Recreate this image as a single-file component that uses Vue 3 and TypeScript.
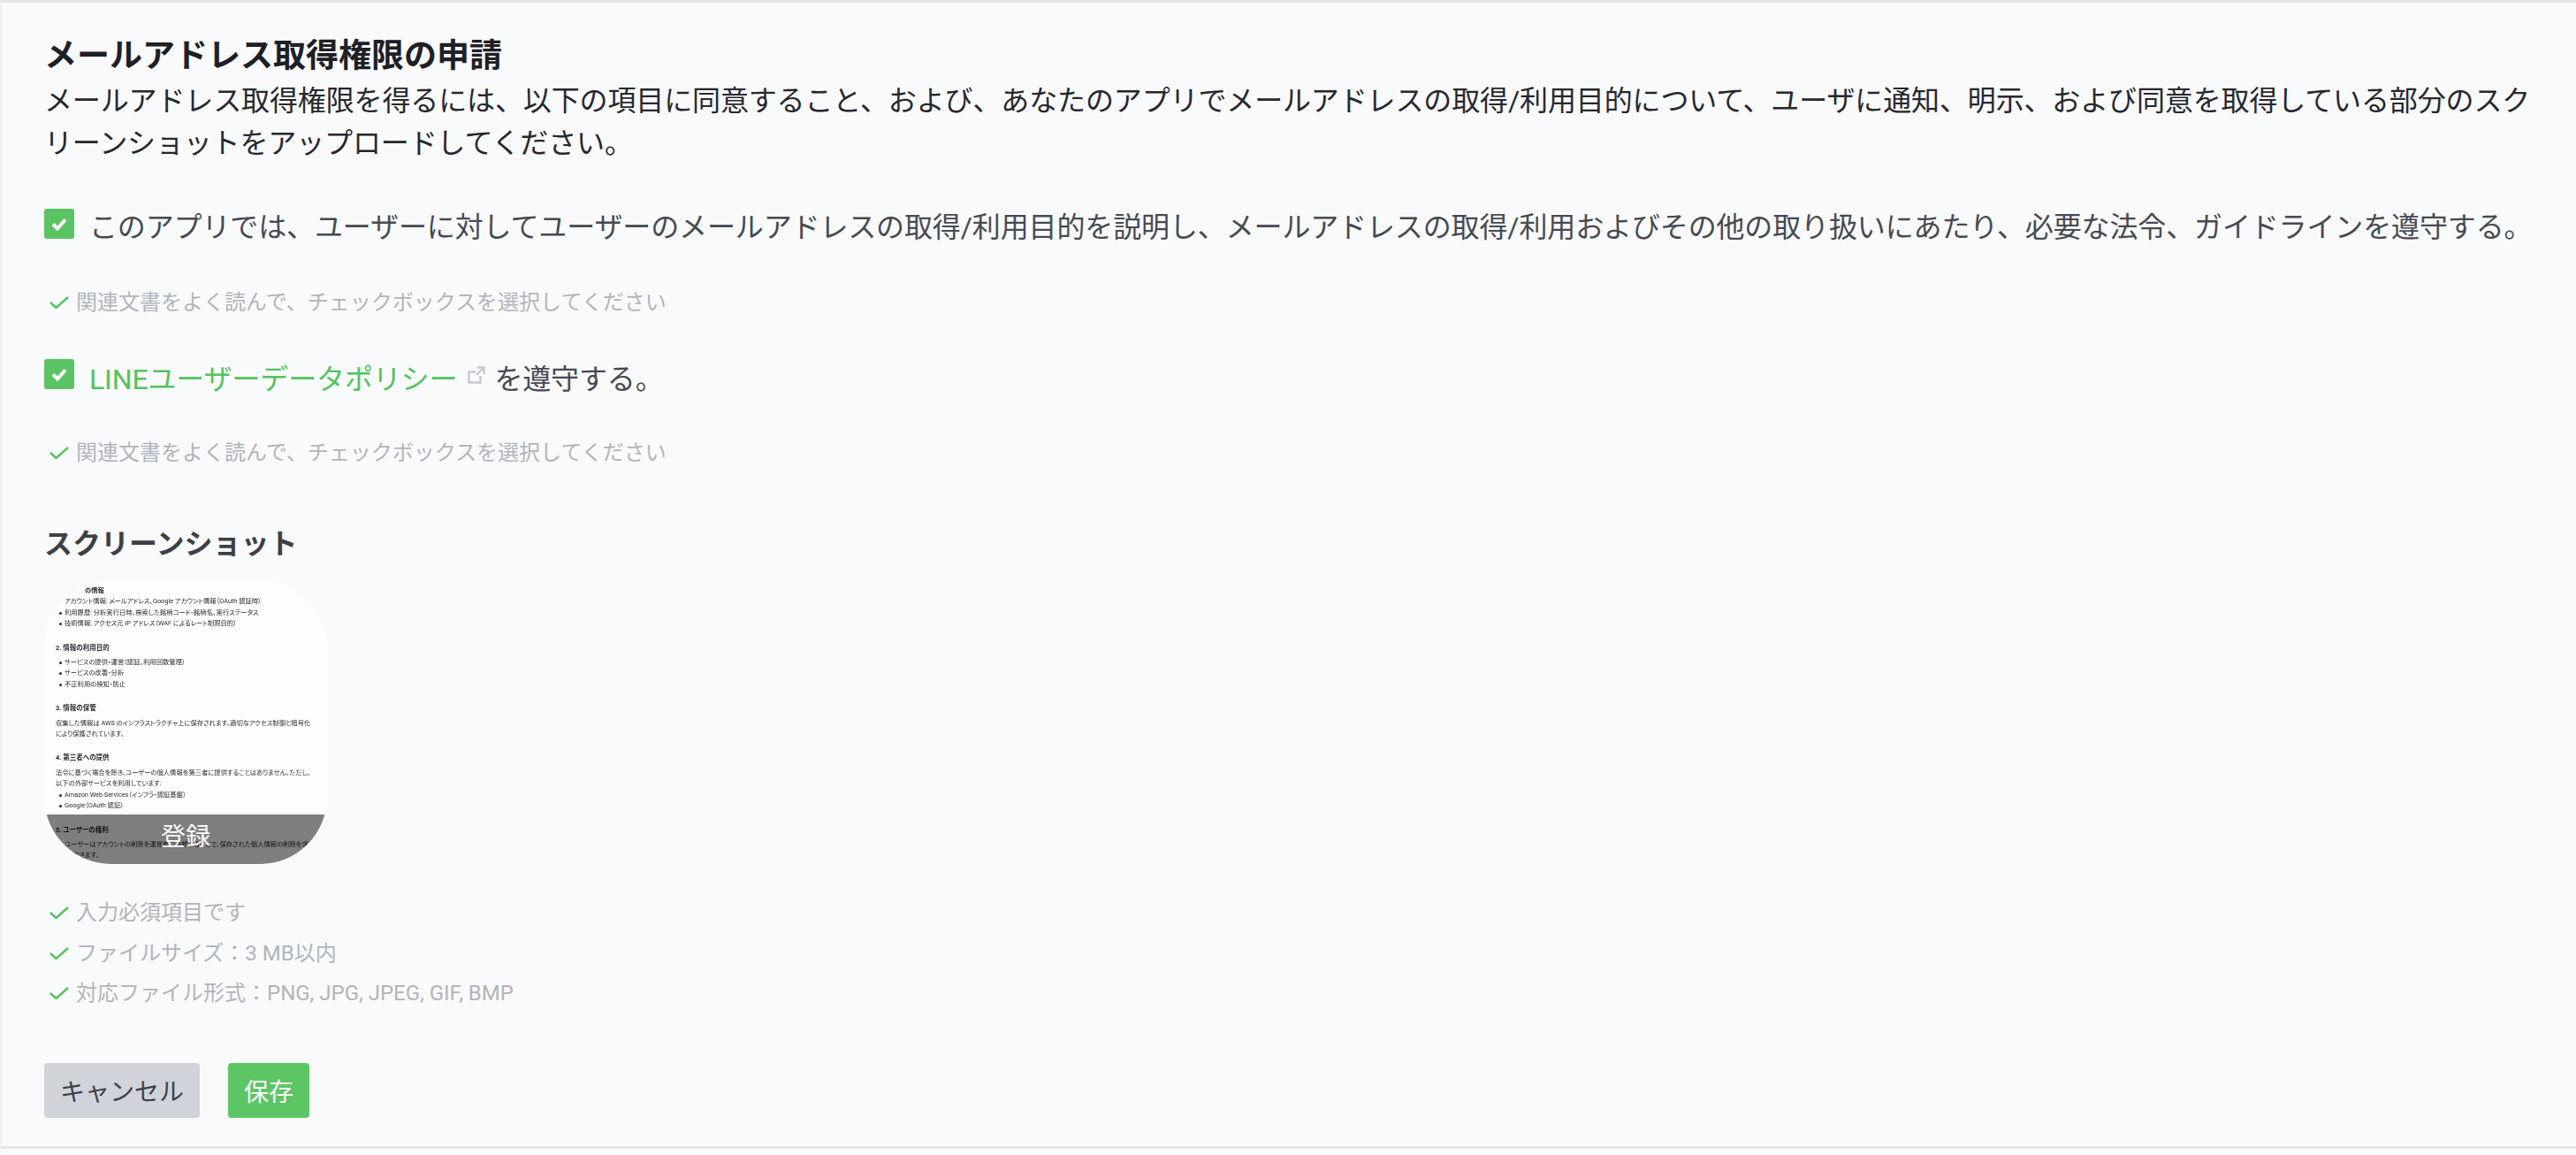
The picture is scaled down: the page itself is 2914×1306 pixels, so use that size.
<script setup lang="ts">
interface Hint { id: number; text: string }
const listHints: Hint[] = [
  { id: 1, text: '入力必須項目です' },
  { id: 2, text: 'ファイルサイズ：3 MB以内' },
  { id: 3, text: '対応ファイル形式：PNG, JPG, JPEG, GIF, BMP' },
]
const readHint = '関連文書をよく読んで、チェックボックスを選択してください'
</script>

<template>
  <main class="panel">
    <h1 class="title">メールアドレス取得権限の申請</h1>
    <p class="lead">メールアドレス取得権限を得るには、以下の項目に同意すること、および、あなたのアプリでメールアドレスの取得/利用目的について、ユーザに通知、明示、および同意を取得している部分のスクリーンショットをアップロードしてください。</p>

    <div class="agree first">
      <span class="box"><svg viewBox="0 0 34 34" class="box-check"><path d="M10 17.500l5 4.800 9-10" /></svg></span>
      <span class="agree-text">このアプリでは、ユーザーに対してユーザーのメールアドレスの取得/利用目的を説明し、メールアドレスの取得/利用およびその他の取り扱いにあたり、必要な法令、ガイドラインを遵守する。</span>
    </div>
    <div class="hint read-hint first-hint">
      <svg viewBox="0 0 22 14" class="tick"><path d="M1 7l6.500 6L21 1" /></svg>
      <span>{{ readHint }}</span>
    </div>

    <div class="agree second">
      <span class="box"><svg viewBox="0 0 34 34" class="box-check"><path d="M10 17.500l5 4.800 9-10" /></svg></span>
      <span class="agree-text">
        <span class="link">LINEユーザーデータポリシー</span>
        <svg viewBox="0 0 20 20" class="ext"><path d="M9 6.500H1.500V18.500H14.500V11M11 1.500h7.500V9M18 2l-8 8" /></svg>
        <span class="after">を遵守する。</span>
      </span>
    </div>
    <div class="hint read-hint">
      <svg viewBox="0 0 22 14" class="tick"><path d="M1 7l6.500 6L21 1" /></svg>
      <span>{{ readHint }}</span>
    </div>

    <h2 class="sub">スクリーンショット</h2>
    <div class="shot">
      <div class="doc">
        <div class="d-first"><b>の情報</b></div>
        <div class="li">アカウント情報: メールアドレス、Google アカウント情報（OAuth 認証時）</div>
        <div class="li">利用履歴: 分析実行日時、検索した銘柄コード・銘柄名、実行ステータス</div>
        <div class="li">技術情報: アクセス元 IP アドレス（WAF によるレート制限目的）</div>
        <h3>2. 情報の利用目的</h3>
        <div class="li">サービスの提供・運営（認証、利用回数管理）</div>
        <div class="li">サービスの改善・分析</div>
        <div class="li">不正利用の検知・防止</div>
        <h3>3. 情報の保管</h3>
        <div class="para">収集した情報は AWS のインフラストラクチャ上に保存されます。適切なアクセス制御と暗号化</div>
        <div class="para">により保護されています。</div>
        <h3>4. 第三者への提供</h3>
        <div class="para">法令に基づく場合を除き、ユーザーの個人情報を第三者に提供することはありません。ただし、</div>
        <div class="para">以下の外部サービスを利用しています:</div>
        <div class="li">Amazon Web Services（インフラ・認証基盤）</div>
        <div class="li">Google（OAuth 認証）</div>
        <h3>5. ユーザーの権利</h3>
        <div class="li">ユーザーはアカウントの削除を運営者に依頼することで、保存された個人情報の削除を求める</div>
        <div class="para">ことができます。</div>
      </div>
      <div class="shot-overlay">登録</div>
    </div>

    <div class="hints">
      <div v-for="h in listHints" :key="h.id" class="hint">
        <svg viewBox="0 0 22 14" class="tick"><path d="M1 7l6.500 6L21 1" /></svg>
        <span>{{ h.text }}</span>
      </div>
    </div>

    <div class="actions">
      <button class="btn cancel" type="button">キャンセル</button>
      <button class="btn save" type="button">保存</button>
    </div>
  </main>
</template>

<style>
html, body { margin: 0; background: #f9fafc; }
</style>

<style scoped>
.panel {
  box-sizing: border-box;
  height: 1299px;
  width: 2914px;
  padding: 37px 40px 0 48px;
  background: #f9fafc;
  border-top: 3px solid #e2e4e8;
  border-bottom: 3px solid #e2e4e8;
  border-left: 2px solid #eef0f3;
  font-family: Roboto, "Noto Sans CJK JP", sans-serif;
  color: #464a52;
}
.title {
  margin: 0;
  font-size: 37px;
  line-height: 48px;
  font-weight: 700;
  color: #1e2025;
}
.lead {
  margin: 2px 0 0;
  font-size: 32px;
  line-height: 48px;
  letter-spacing: -0.13px;
  color: #26282e;
}
.agree { display: flex; align-items: flex-start; gap: 17px; }
.agree.first { margin-top: 47px; }
.agree.second { margin-top: 43px; }
.second .agree-text { padding-top: 2px; }
.box {
  flex: none;
  width: 34px;
  height: 34px;
  margin-top: 3px;
  border-radius: 3px;
  background: #5ac463;
}
.box-check { display: block; width: 34px; height: 34px; }
.box-check path { fill: none; stroke: #fff; stroke-width: 4; }
.agree-text { font-size: 32px; line-height: 48px; letter-spacing: -0.13px; white-space: nowrap; }
.link { color: #55c25f; }
.ext {
  display: inline-block;
  width: 20px;
  height: 20px;
  margin: 0 10px 0 12px;
  vertical-align: 6px;
}
.ext path { fill: none; stroke: #c5c8ce; stroke-width: 2.400; }
.hint {
  display: flex;
  align-items: center;
  gap: 8px;
  height: 36px;
  padding-left: 6px;
  font-size: 24px;
  line-height: 36px;
  color: #b0b5bd;
  white-space: nowrap;
}
.read-hint { margin-top: 41px; }
.read-hint.first-hint { margin-top: 43px; }
.tick { flex: none; width: 22px; height: 14px; }
.tick path { fill: none; stroke: #55c25f; stroke-width: 2.400; }
.sub {
  margin: 61px 0 0;
  font-size: 32px;
  line-height: 48px;
  font-weight: 700;
  color: #3c4047;
}
.shot {
  position: relative;
  width: 320px;
  height: 320px;
  margin-top: 18px;
  border-radius: 76px;
  overflow: hidden;
  background: #fdfdfd;
}
.doc {
  padding: 5px 0 0 13px;
  font-size: 7.300px;
  line-height: 12.400px;
  font-feature-settings: "palt";
  color: #2a2b30;
  white-space: nowrap;
  filter: blur(0.350px);
}
.d-first { padding-left: 33px; }
.doc h3 { margin: 15px 0 4px; font-size: 7.500px; line-height: 12.400px; font-weight: 700; }
.li { position: relative; padding-left: 10px; }
.li::before {
  content: "";
  position: absolute;
  left: 4px;
  top: 5px;
  width: 3px;
  height: 3px;
  border-radius: 50%;
  background: #2a2b30;
}
.shot-overlay {
  position: absolute;
  left: 0;
  right: 0;
  bottom: 0;
  height: 56px;
  background: rgba(0, 0, 0, 0.5);
  color: #fff;
  font-size: 28px;
  line-height: 52px;
  text-align: center;
}
.hints { display: flex; flex-direction: column; gap: 9.500px; margin-top: 37px; }
.actions { display: flex; gap: 32px; margin-top: 61px; }
.btn {
  height: 62px;
  padding: 0 18px;
  border: 0;
  border-radius: 4px;
  font: inherit;
  font-size: 28px;
}
.cancel { background: #d0d3da; color: #3c4047; }
.save { background: #5cc665; color: #fff; }
</style>
